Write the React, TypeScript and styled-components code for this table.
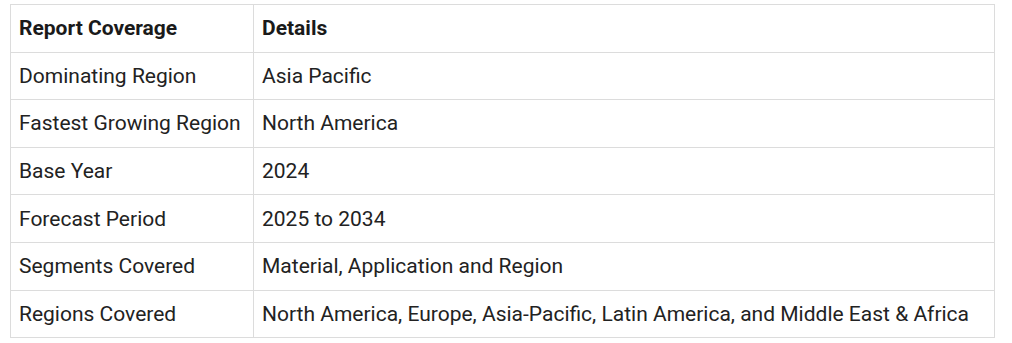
import React from "react";
import styled, { createGlobalStyle } from "styled-components";

const GlobalStyle = createGlobalStyle`
  html, body {
    margin: 0;
    padding: 0;
    background: #ffffff;
  }
  body {
    font-family: Roboto, "Liberation Sans", sans-serif;
  }
`;

const Page = styled.div`
  padding: 4px 0 0 10px;
`;

const Table = styled.table`
  width: 985px;
  border-collapse: collapse;
  table-layout: fixed;
  color: #222222;
  font-size: 21px;
`;

const Cell = styled.td<{ $head?: boolean }>`
  border: 1px solid #dcdcdc;
  height: 47.6px;
  padding: 0 8px;
  box-sizing: border-box;
  vertical-align: middle;
  white-space: nowrap;
  font-weight: ${({ $head }) => ($head ? 700 : 400)};
  color: ${({ $head }) => ($head ? "#1a1a1a" : "#222222")};
`;

const rows: [string, string][] = [
  ["Dominating Region", "Asia Pacific"],
  ["Fastest Growing Region", "North America"],
  ["Base Year", "2024"],
  ["Forecast Period", "2025 to 2034"],
  ["Segments Covered", "Material, Application and Region"],
  ["Regions Covered", "North America, Europe, Asia-Pacific, Latin America, and Middle East & Africa"],
];

export default function App() {
  return (
    <Page>
      <GlobalStyle />
      <Table>
        <colgroup>
          <col style={{ width: 243 }} />
          <col />
        </colgroup>
        <tbody>
          <tr>
            <Cell $head>Report Coverage</Cell>
            <Cell $head>Details</Cell>
          </tr>
          {rows.map(([k, v]) => (
            <tr key={k}>
              <Cell>{k}</Cell>
              <Cell>{v}</Cell>
            </tr>
          ))}
        </tbody>
      </Table>
    </Page>
  );
}
